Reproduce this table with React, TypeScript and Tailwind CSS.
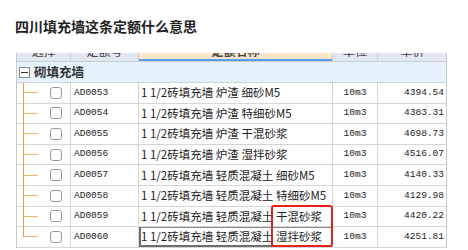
const cols = 'grid grid-cols-[54px_68px_194px_45px_69px]';

const rows = [
    { code: 'AD0053', name: '1 1/2砖填充墙 炉渣 细砂M5', price: '4394.54' },
    { code: 'AD0054', name: '1 1/2砖填充墙 炉渣 特细砂M5', price: '4383.31' },
    { code: 'AD0055', name: '1 1/2砖填充墙 炉渣 干混砂浆', price: '4698.73' },
    { code: 'AD0056', name: '1 1/2砖填充墙 炉渣 湿拌砂浆', price: '4516.07' },
    { code: 'AD0057', name: '1 1/2砖填充墙 轻质混凝土 细砂M5', price: '4140.33' },
    { code: 'AD0058', name: '1 1/2砖填充墙 轻质混凝土 特细砂M5', price: '4129.98' },
    { code: 'AD0059', name: '1 1/2砖填充墙 轻质混凝土 干混砂浆', price: '4420.22' },
    { code: 'AD0060', name: '1 1/2砖填充墙 轻质混凝土 湿拌砂浆', price: '4251.81' },
];

const cjk = { fontFamily: '"Noto Sans CJK SC", "Noto Sans", sans-serif' };
const mono = { fontFamily: '"Liberation Mono", "Noto Sans CJK SC", monospace' };

export default function App() {
    return (
        <div className="h-[250px] w-[468px] overflow-hidden bg-white" style={cjk}>
            <h1 className="pl-[15px] pt-[16px] text-[14px] font-bold leading-[20px] text-[#222]">
                四川填充墙这条定额什么意思
            </h1>

            <div className="relative ml-[16px] mt-[17px] w-[431px] border-x border-[#c8c8c8]">
                {/* header, top half is cut off in the screenshot */}
                <div className={`${cols} h-[9px] overflow-hidden border-b border-[#c9ced6] bg-[#e3e8f0] text-[12px] text-[#444]`}>
                    <div className="border-r border-[#c9ced6] text-center"><span className="-mt-[12px] block leading-[20px]">选择</span></div>
                    <div className="border-r border-[#c9ced6] text-center"><span className="-mt-[12px] block leading-[20px]">定额号</span></div>
                    <div className="border-r border-[#c9ced6] bg-[#fde6cb] text-center font-bold shadow-[inset_0_-2px_0_#5a9be6]"><span className="-mt-[12px] block leading-[20px]">定额名称</span></div>
                    <div className="border-r border-[#c9ced6] text-center"><span className="-mt-[12px] block leading-[20px]">单位</span></div>
                    <div className="text-center"><span className="-mt-[12px] block leading-[20px]">单价</span></div>
                </div>

                {/* group row */}
                <div className="flex h-[21px] items-center border-b border-[#d0d0d0] bg-[#e6f3fe]">
                    <div className="ml-[2px] flex h-[11px] w-[11px] items-center justify-center border border-[#8a8a8a] bg-white">
                        <div className="h-px w-[7px] bg-[#333]" />
                    </div>
                    <span className="ml-[4px] text-[12.5px] font-bold text-[#333]">砌填充墙</span>
                </div>

                {rows.map((r, i) => (
                    <div key={r.code} className={`${cols} h-[20.6px] border-b border-[#d6d6d6] text-[#222]`}>
                        <div className="relative flex items-center border-r border-[#d6d6d6]">
                            <div className={`absolute left-[6px] top-0 w-px bg-[#f39a3e] ${i === rows.length - 1 ? 'h-1/2' : i === 0 ? '-top-[4px] h-[calc(100%+5px)]' : 'h-[calc(100%+1px)]'}`} />
                            <div className="ml-[7px] h-px w-[14px] bg-[#f6b36e]" />
                            <div className="ml-[12px] h-[12px] w-[12px] rounded-[3px] border border-[#9a9a9a] bg-white" />
                        </div>
                        <div className="flex items-center border-r border-[#d6d6d6] pl-[3px] text-[9.5px]" style={mono}>
                            {r.code}
                        </div>
                        <div className={`flex items-center border-r border-[#d6d6d6] pl-[2px] text-[11.5px] ${i === rows.length - 1 ? 'shadow-[inset_2px_0_0_#6e6e6e,inset_0_-2px_0_#6e6e6e,inset_0_1px_0_#8a8a8a]' : ''}`}>
                            <span className="whitespace-nowrap">{r.name}</span>
                        </div>
                        <div className="flex items-center justify-center border-r border-[#d6d6d6] text-[9.5px]" style={mono}>
                            10m3
                        </div>
                        <div className="flex items-center justify-end pr-[3px] text-[9.5px]" style={mono}>
                            {r.price}
                        </div>
                    </div>
                ))}

                {/* red annotation box */}
                <div className="absolute left-[254px] top-[152px] h-[42px] w-[62px] rounded-[3px] border-2 border-[#e4231f]" />
            </div>
        </div>
    );
}
